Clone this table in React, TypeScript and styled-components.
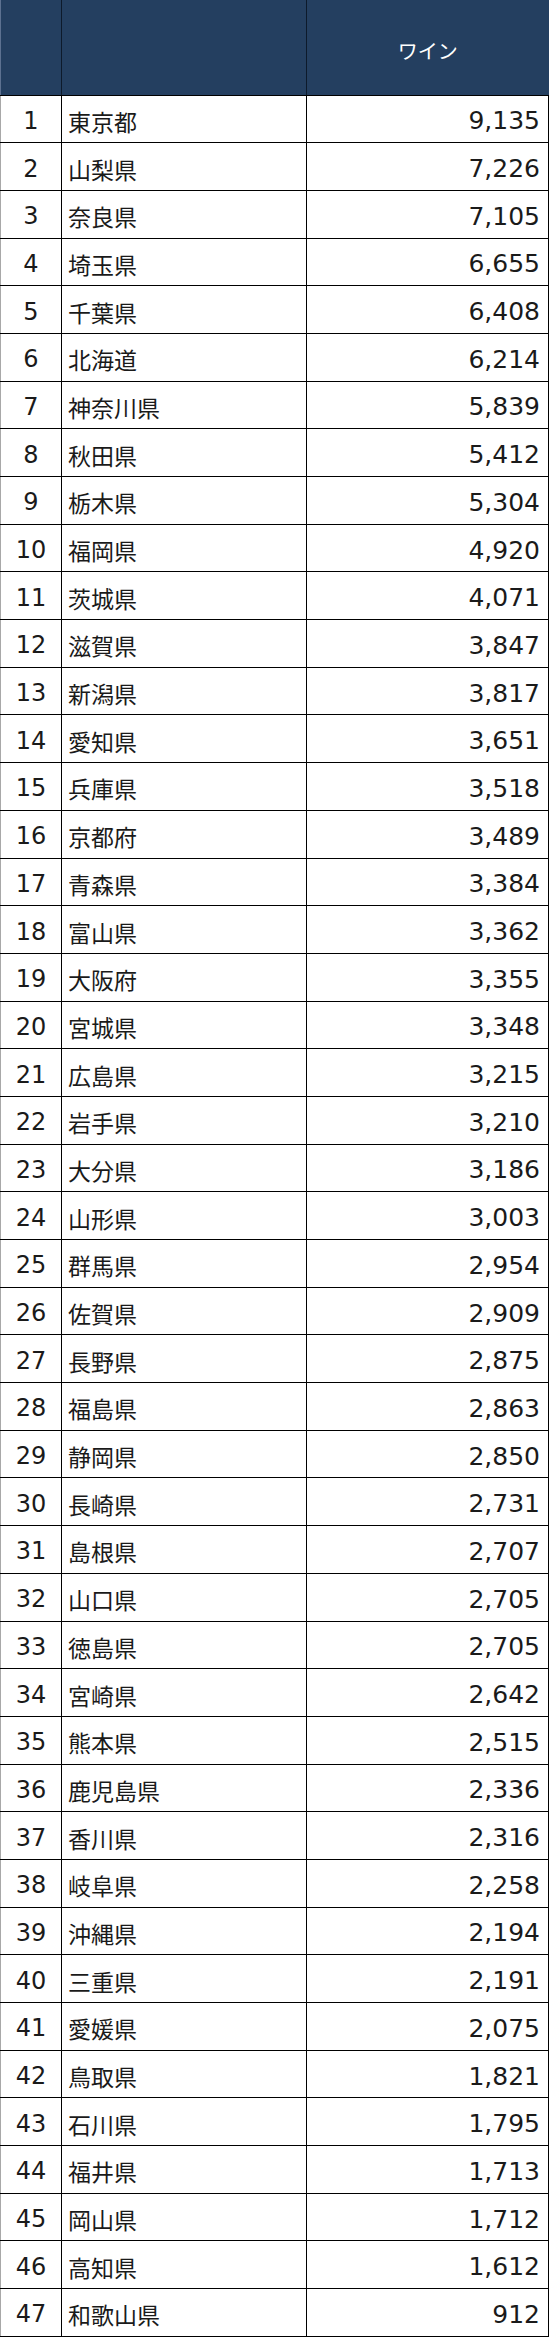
import React from "react";
import styled, { createGlobalStyle } from "styled-components";

const GlobalStyle = createGlobalStyle`
  html, body {
    margin: 0;
    padding: 0;
    background: #ffffff;
  }
`;

const Table = styled.table`
  width: 549px;
  border-collapse: collapse;
  table-layout: fixed;
  font-family: "DejaVu Sans", "Noto Sans CJK JP", sans-serif;
  color: #1a1a1a;
`;

const HeadRow = styled.tr`
  height: 95px;
  background: #243f60;
`;

const HeadCell = styled.th<{ $w?: number }>`
  width: ${({ $w }) => ($w ? `${$w}px` : "auto")};
  padding: 6px 0 0;
  border-left: 1px solid #0d1a2b;
  border-bottom: 1px solid #000;
  color: #ffffff;
  font-family: "Noto Sans CJK JP", sans-serif;
  font-weight: 400;
  font-size: 20px;
  text-align: center;
  &:first-child {
    border-left: 1px solid #5d7190;
  }
`;

const Row = styled.tr`
  height: 47.7px;
`;

const Cell = styled.td<{ $align: "left" | "center" | "right"; $size?: number }>`
  padding: 4px 8px 0 6px;
  border-left: 1px solid #000;
  border-bottom: 1px solid #000;
  font-size: ${({ $size }) => $size ?? 24}px;
  text-align: ${({ $align }) => $align};
  white-space: nowrap;
  overflow: hidden;
  &:first-child {
    border-left: 1px solid #a8a8a8;
    padding: 4px 0 0;
  }
  &:last-child {
    border-right: 1px solid #000;
  }
`;

const Name = styled.span`
  font-family: "Noto Sans CJK JP", sans-serif;
  font-size: 23px;
`;

const data: [string, string][] = [
  ["東京都", "9,135"],
  ["山梨県", "7,226"],
  ["奈良県", "7,105"],
  ["埼玉県", "6,655"],
  ["千葉県", "6,408"],
  ["北海道", "6,214"],
  ["神奈川県", "5,839"],
  ["秋田県", "5,412"],
  ["栃木県", "5,304"],
  ["福岡県", "4,920"],
  ["茨城県", "4,071"],
  ["滋賀県", "3,847"],
  ["新潟県", "3,817"],
  ["愛知県", "3,651"],
  ["兵庫県", "3,518"],
  ["京都府", "3,489"],
  ["青森県", "3,384"],
  ["富山県", "3,362"],
  ["大阪府", "3,355"],
  ["宮城県", "3,348"],
  ["広島県", "3,215"],
  ["岩手県", "3,210"],
  ["大分県", "3,186"],
  ["山形県", "3,003"],
  ["群馬県", "2,954"],
  ["佐賀県", "2,909"],
  ["長野県", "2,875"],
  ["福島県", "2,863"],
  ["静岡県", "2,850"],
  ["長崎県", "2,731"],
  ["島根県", "2,707"],
  ["山口県", "2,705"],
  ["徳島県", "2,705"],
  ["宮崎県", "2,642"],
  ["熊本県", "2,515"],
  ["鹿児島県", "2,336"],
  ["香川県", "2,316"],
  ["岐阜県", "2,258"],
  ["沖縄県", "2,194"],
  ["三重県", "2,191"],
  ["愛媛県", "2,075"],
  ["鳥取県", "1,821"],
  ["石川県", "1,795"],
  ["福井県", "1,713"],
  ["岡山県", "1,712"],
  ["高知県", "1,612"],
  ["和歌山県", "912"],
];

export default function App() {
  return (
    <>
      <GlobalStyle />
      <Table>
        <thead>
          <HeadRow>
            <HeadCell $w={60} />
            <HeadCell $w={244} />
            <HeadCell>ワイン</HeadCell>
          </HeadRow>
        </thead>
        <tbody>
          {data.map(([pref, value], i) => (
            <Row key={pref}>
              <Cell $align="center">{i + 1}</Cell>
              <Cell $align="left">
                <Name>{pref}</Name>
              </Cell>
              <Cell $align="right" $size={25}>
                {value}
              </Cell>
            </Row>
          ))}
        </tbody>
      </Table>
    </>
  );
}
